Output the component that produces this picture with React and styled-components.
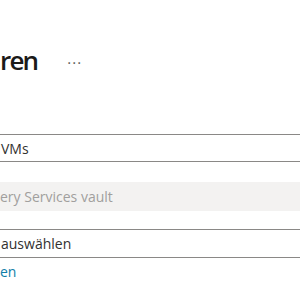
import React from "react";
import styled, { createGlobalStyle } from "styled-components";

const Global = createGlobalStyle`
  html, body { margin: 0; padding: 0; background: #fff; overflow: hidden; }
  body { font-family: "Open Sans", "Noto Sans", sans-serif; }
`;

const Page = styled.div`
  width: 300px;
  height: 300px;
  overflow: hidden;
  display: flex;
  flex-direction: column;
  padding-top: 42px;
  box-sizing: border-box;
`;

const Header = styled.div`
  display: flex;
  align-items: center;
  gap: 30px;
  height: 36px;
`;

const Title = styled.h1`
  margin: 0;
  font-size: 26px;
  font-weight: 600;
  color: #1b1a19;
  letter-spacing: -1.8px;
  line-height: 36px;
`;

const More = styled.span`
  font-size: 15px;
  color: #605e5c;
  letter-spacing: 1px;
  line-height: 1;
  padding-top: 4px;
`;

const Form = styled.div`
  display: flex;
  flex-direction: column;
  margin-top: 56px;
  margin-left: -20px;
  margin-right: -2px;
`;

const Field = styled.div`
  height: ${(p) => p.$h || 28}px;
  box-sizing: border-box;
  border: ${(p) => (p.$disabled ? "none" : "1px solid #8a8886")};
  background: ${(p) => (p.$disabled ? "#f3f2f1" : "#fff")};
  border-radius: 2px;
  display: flex;
  align-items: center;
  padding-left: 20px;
  font-size: 14px;
  color: ${(p) => (p.$disabled ? "#a19f9d" : "#323130")};
  margin-top: ${(p) => p.$gap || 0}px;
`;

const Link = styled.a`
  display: block;
  margin-top: 4px;
  font-size: 14px;
  color: #107ea8;
  text-decoration: none;
  line-height: 20px;
`;

export default function App() {
  return (
    <Page>
      <Global />
      <Header>
        <Title>ren</Title>
        <More>···</More>
      </Header>
      <Form>
        <Field>VMs</Field>
        <Field $disabled $gap={20} $h={29}>ery Services vault</Field>
        <Field $gap={18} $h={29}>auswählen</Field>
      </Form>
      <Link href="#">en</Link>
    </Page>
  );
}
